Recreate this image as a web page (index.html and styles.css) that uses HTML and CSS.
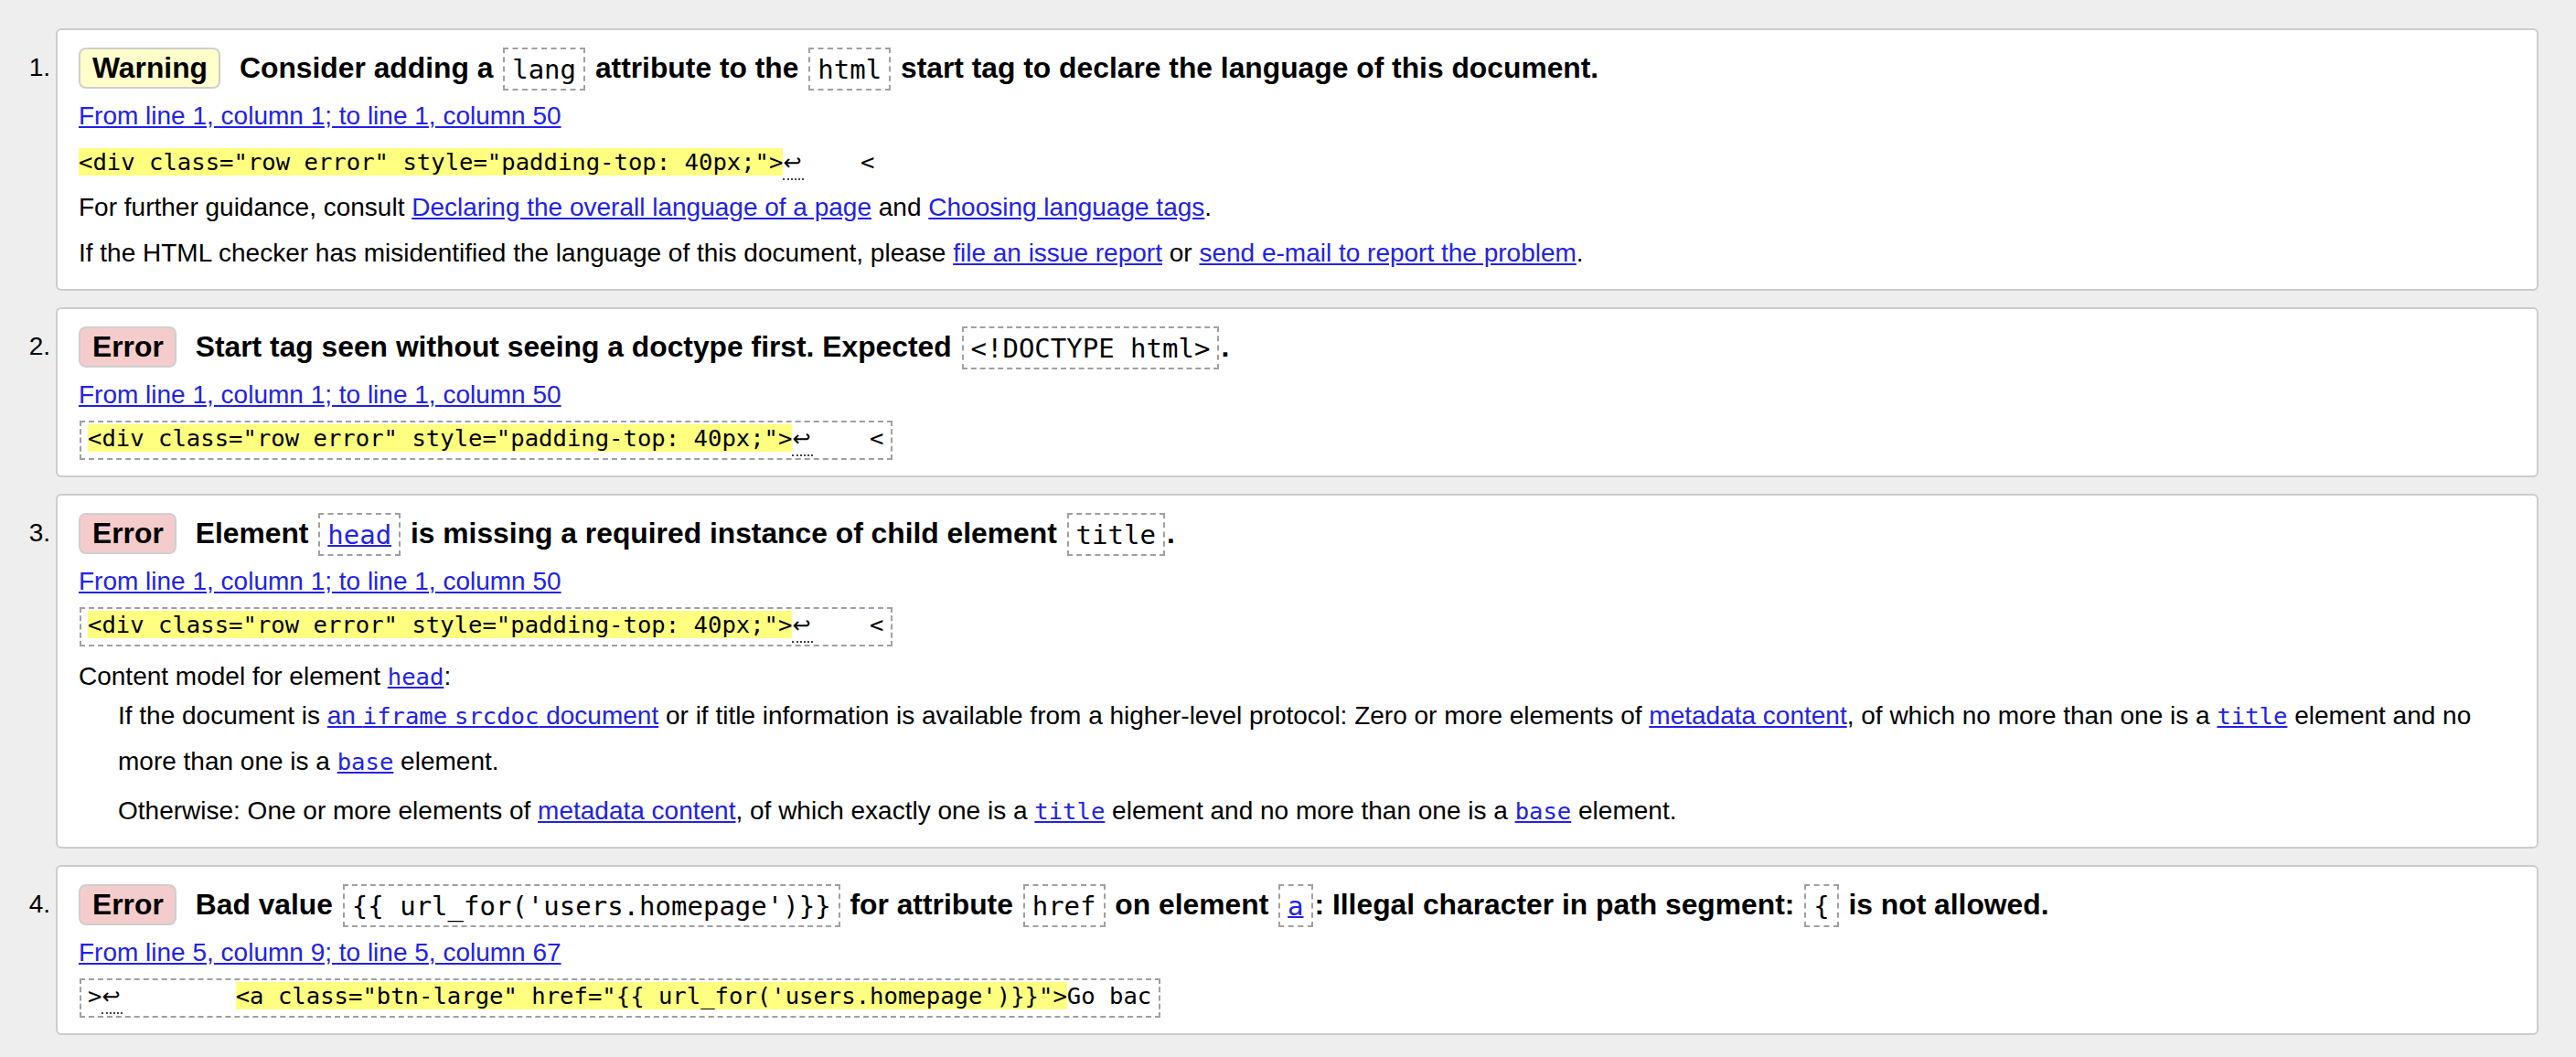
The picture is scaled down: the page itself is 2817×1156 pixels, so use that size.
FILE: index.html
```html
<!DOCTYPE html>
<html lang="en">
<head>
<meta charset="utf-8">
<title>Validator messages</title>
<link rel="stylesheet" href="styles.css">
</head>
<body>
<ol class="messages">
  <li class="msg">
    <span class="num">1.</span>
    <div class="card">
      <div class="head-row">
        <span class="badge badge-warning">Warning</span>
        <span class="msg-text">Consider adding a <code class="hc">lang</code> attribute to the <code class="hc">html</code> start tag to declare the language of this document.</span>
      </div>
      <p class="loc"><a href="#">From line 1, column 1; to line 1, column 50</a></p>
      <p class="extract"><code><mark>&lt;div class="row error" style="padding-top: 40px;"&gt;</mark><abbr class="lf" title="U+000A LINE FEED">↩</abbr>    &lt;</code></p>
      <p class="info">For further guidance, consult <a href="#">Declaring the overall language of a page</a> and <a href="#">Choosing language tags</a>.</p>
      <p class="info">If the HTML checker has misidentified the language of this document, please <a href="#">file an issue report</a> or <a href="#">send e-mail to report the problem</a>.</p>
    </div>
  </li>
  <li class="msg">
    <span class="num">2.</span>
    <div class="card">
      <div class="head-row">
        <span class="badge badge-error">Error</span>
        <span class="msg-text">Start tag seen without seeing a doctype first. Expected <code class="hc">&lt;!DOCTYPE html&gt;</code>.</span>
      </div>
      <p class="loc"><a href="#">From line 1, column 1; to line 1, column 50</a></p>
      <p class="extract boxed"><code><mark>&lt;div class="row error" style="padding-top: 40px;"&gt;</mark><abbr class="lf" title="U+000A LINE FEED">↩</abbr>    &lt;</code></p>
    </div>
  </li>
  <li class="msg">
    <span class="num">3.</span>
    <div class="card">
      <div class="head-row">
        <span class="badge badge-error">Error</span>
        <span class="msg-text">Element <code class="hc"><a href="#">head</a></code> is missing a required instance of child element <code class="hc">title</code>.</span>
      </div>
      <p class="loc"><a href="#">From line 1, column 1; to line 1, column 50</a></p>
      <p class="extract boxed"><code><mark>&lt;div class="row error" style="padding-top: 40px;"&gt;</mark><abbr class="lf" title="U+000A LINE FEED">↩</abbr>    &lt;</code></p>
      <dl class="model">
        <dt>Content model for element <a href="#"><code class="c">head</code></a>:</dt>
        <dd>
          <p>If the document is <a href="#">an <code class="c">iframe</code> <code class="c">srcdoc</code> document</a> or if title information is available from a higher-level protocol: Zero or more elements of <a href="#">metadata content</a>, of which no more than one is a <a href="#"><code class="c">title</code></a> element and no more than one is a <a href="#"><code class="c">base</code></a> element.</p>
          <p>Otherwise: One or more elements of <a href="#">metadata content</a>, of which exactly one is a <a href="#"><code class="c">title</code></a> element and no more than one is a <a href="#"><code class="c">base</code></a> element.</p>
        </dd>
      </dl>
    </div>
  </li>
  <li class="msg">
    <span class="num">4.</span>
    <div class="card">
      <div class="head-row">
        <span class="badge badge-error">Error</span>
        <span class="msg-text">Bad value <code class="hc">{{ url_for('users.homepage')}}</code> for attribute <code class="hc">href</code> on element <code class="hc"><a href="#">a</a></code>: Illegal character in path segment: <code class="hc">{</code> is not allowed.</span>
      </div>
      <p class="loc"><a href="#">From line 5, column 9; to line 5, column 67</a></p>
      <p class="extract boxed"><code>&gt;<abbr class="lf" title="U+000A LINE FEED">↩</abbr>        <mark>&lt;a class="btn-large" href="{{ url_for('users.homepage')}}"&gt;</mark>Go bac</code></p>
    </div>
  </li>
</ol>
</body>
</html>
```

FILE: styles.css
```css
html, body {
  margin: 0;
  padding: 0;
}

body {
  background: #eeeeee;
  font-family: "Liberation Sans", Arial, sans-serif;
  font-size: 28px;
  color: #000;
}

a {
  color: #2222e6;
}

.messages {
  list-style: none;
  margin: 31px 41px 0 0;
  padding: 0;
}

.msg {
  display: grid;
  grid-template-columns: 61px 1fr;
  margin-bottom: 18px;
}

.num {
  padding: 21px 6px 0 0;
  text-align: right;
  line-height: 44px;
}

.card {
  min-width: 0;
  background: #fff;
  border: 2px solid #cccccc;
  border-radius: 6px;
  padding: 19px 24px 14px 23px;
}

.head-row {
  display: flex;
  align-items: center;
  gap: 21px;
  min-height: 44px;
  font-size: 31.8px;
  font-weight: bold;
}

.badge {
  flex: none;
  padding: 2px 12px 2px 13px;
  border: 2px solid #cfcfcf;
  border-radius: 8px;
}

.badge-warning {
  background: #ffffcc;
}

.badge-error {
  background: #f5cccc;
}

.hc {
  font-family: "DejaVu Sans Mono", "Liberation Mono", monospace;
  font-size: 29px;
  font-weight: normal;
  border: 2px dashed #a0a0a0;
  padding: 4.5px 8px;
  margin: 0 2px;
}

.c {
  font-family: "DejaVu Sans Mono", "Liberation Mono", monospace;
  font-size: 25.6px;
}

.loc {
  margin: 5px 0 0;
  line-height: 50px;
}

.extract {
  margin: 0;
  line-height: 50px;
  font-family: "DejaVu Sans Mono", "Liberation Mono", monospace;
  font-size: 25.6px;
  white-space: pre;
}

.extract code {
  font-family: inherit;
}

.extract mark {
  background: #ffff80;
  color: inherit;
}

.extract.boxed {
  width: fit-content;
  margin: 3px 0 3px 1px;
  border: 2px dashed #a0a0a0;
  padding: 2px 8px 2px 7px;
  line-height: 30px;
}

.lf {
  display: inline-block;
  width: 23px;
  line-height: 26px;
  padding-bottom: 4px;
  border-bottom: 2px dotted #444;
  font-family: "DejaVu Sans", sans-serif;
  font-size: 24px;
  text-decoration: none;
  vertical-align: baseline;
}

.info {
  margin: 0;
  line-height: 50px;
}

.model {
  margin: 0;
}

.model dt {
  margin-top: 15px;
  line-height: 36px;
}

.model dd {
  margin: 0 0 0 43px;
}

.model dd p {
  margin: 0;
  line-height: 50px;
}

.model dd p + p {
  margin-top: 4px;
}
```
